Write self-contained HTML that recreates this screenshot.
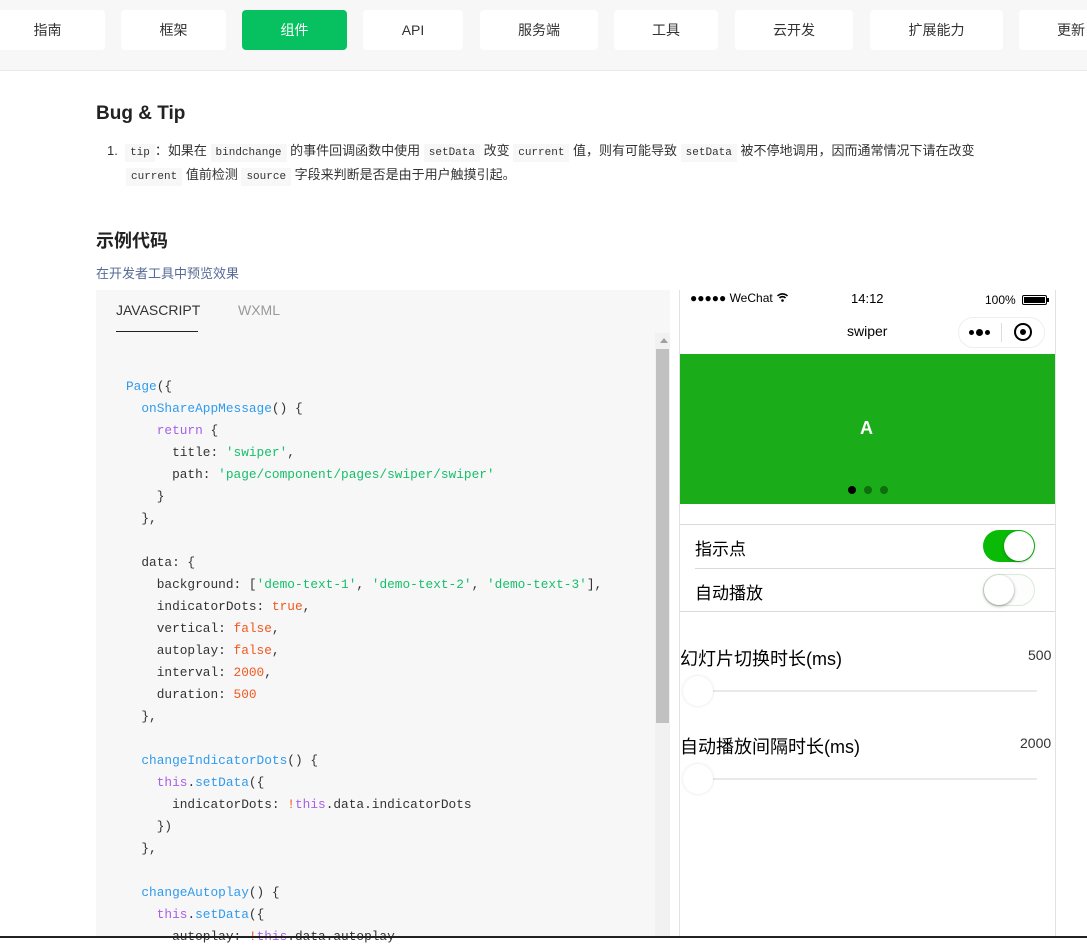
<!DOCTYPE html>
<html><head><meta charset="utf-8"><style>
*{margin:0;padding:0;box-sizing:border-box}
body{width:1087px;height:938px;overflow:hidden;background:#fff;font-family:"Liberation Sans","Noto Sans CJK SC",sans-serif;color:#333;position:relative}
.hdr{position:absolute;left:0;top:0;width:1087px;height:71px;background:#f7f7f7;border-bottom:1px solid #eaeaea}
.nb{position:absolute;top:10px;height:40px;background:#fff;border-radius:4px;font-size:14px;line-height:40px;text-align:center;color:#333}
.nb.on{background:#07c160;color:#fff}
.abs{position:absolute}
code{font-family:"Liberation Mono",monospace;font-size:11px;background:#f7f7f7;padding:3px 5px;color:#333;line-height:14px}
.code{position:absolute;left:96px;top:290px;width:574px;height:648px;background:#f7f7f7}
pre{position:absolute;left:126px;top:376px;font-family:"Liberation Mono",monospace;font-size:12.8px;line-height:22px;color:#333}
.b{color:#2f9bef}.p{color:#a860e8}.g{color:#16c06a}.o{color:#f2581f}
.ph{position:absolute;left:679px;top:290px;width:377px;height:648px;border-left:1px solid #e2e2e2;border-right:1px solid #e2e2e2;background:#fff}
.sw{position:absolute;width:52px;height:32px;border-radius:16px}
</style></head><body>
<div class="hdr"></div>
<div class="nb" style="left:-10px;width:115px">指南</div>
<div class="nb" style="left:121px;width:105px">框架</div>
<div class="nb on" style="left:242px;width:105px">组件</div>
<div class="nb" style="left:363px;width:100px">API</div>
<div class="nb" style="left:480px;width:118px">服务端</div>
<div class="nb" style="left:614px;width:104px">工具</div>
<div class="nb" style="left:735px;width:118px">云开发</div>
<div class="nb" style="left:870px;width:133px">扩展能力</div>
<div class="nb" style="left:1019px;width:90px;text-align:left;padding-left:38px">更新</div>

<div class="abs" style="left:96px;top:103px;font-size:19px;font-weight:bold;color:#222">Bug &amp; Tip</div>
<div class="abs" style="left:107px;top:139px;font-size:13px;line-height:24px;width:930px">1.&nbsp; <code>tip</code>：如果在 <code>bindchange</code> 的事件回调函数中使用 <code>setData</code> 改变 <code>current</code> 值，则有可能导致 <code>setData</code> 被不停地调用，因而通常情况下请在改变<br><span style="padding-left:19px"></span><code>current</code> 值前检测 <code>source</code> 字段来判断是否是由于用户触摸引起。</div>
<div class="abs" style="left:96px;top:227px;font-size:18px;font-weight:bold;color:#222">示例代码</div>
<div class="abs" style="left:96px;top:263px;font-size:13px;color:#576b95">在开发者工具中预览效果</div>

<div class="code"></div>
<div class="abs" style="left:116px;top:302px;font-size:14px;color:#333">JAVASCRIPT</div>
<div class="abs" style="left:116px;top:331px;width:82px;height:1px;background:#222"></div>
<div class="abs" style="left:238px;top:302px;font-size:14px;color:#999">WXML</div>
<div class="abs" style="left:655px;top:333px;width:15px;height:605px;background:#f1f1f1"></div>
<div class="abs" style="left:660px;top:338px;width:0;height:0;border-left:4px solid transparent;border-right:4px solid transparent;border-bottom:5px solid #a0a0a0"></div>
<div class="abs" style="left:656px;top:349px;width:13px;height:374px;background:#c1c1c1"></div>
<pre><span class="b">Page</span>({
  <span class="b">onShareAppMessage</span>() {
    <span class="p">return</span> {
      title: <span class="g">'swiper'</span>,
      path: <span class="g">'page/component/pages/swiper/swiper'</span>
    }
  },

  data: {
    background: [<span class="g">'demo-text-1'</span>, <span class="g">'demo-text-2'</span>, <span class="g">'demo-text-3'</span>],
    indicatorDots: <span class="o">true</span>,
    vertical: <span class="o">false</span>,
    autoplay: <span class="o">false</span>,
    interval: <span class="o">2000</span>,
    duration: <span class="o">500</span>
  },

  <span class="b">changeIndicatorDots</span>() {
    <span class="p">this</span>.<span class="b">setData</span>({
      indicatorDots: <span class="o">!</span><span class="p">this</span>.data.indicatorDots
    })
  },

  <span class="b">changeAutoplay</span>() {
    <span class="p">this</span>.<span class="b">setData</span>({
      autoplay: <span class="o">!</span><span class="p">this</span>.data.autoplay</pre>

<div class="ph"></div>
<div class="abs" style="left:690px;top:291px;font-size:12px;color:#000">●●●●● WeChat <svg width="13" height="10" viewBox="0 0 12 10"><path d="M1 4a7 7 0 0 1 10 0M3 6a4 4 0 0 1 6 0" stroke="#000" stroke-width="1.6" fill="none"/><circle cx="6" cy="8.5" r="1.3"/></svg></div>
<div class="abs" style="left:851px;top:291px;font-size:13px;color:#000">14:12</div>
<div class="abs" style="left:985px;top:293px;font-size:12px;color:#000">100%</div>
<div class="abs" style="left:1022px;top:295px;width:25px;height:10px;border:1px solid #000;border-radius:2px;padding:1px"><div style="width:100%;height:100%;background:#000"></div></div>
<div class="abs" style="left:1047px;top:298px;width:2px;height:4px;background:#000"></div>
<div class="abs" style="left:847px;top:323px;font-size:14px;color:#000">swiper</div>
<div class="abs" style="left:958px;top:317px;width:87px;height:31px;border:1px solid #eee;border-radius:16px;background:#fff"></div>
<div class="abs" style="left:969px;top:330px;width:5px;height:5px;background:#000;border-radius:50%"></div>
<div class="abs" style="left:976px;top:329px;width:7px;height:7px;background:#000;border-radius:50%"></div>
<div class="abs" style="left:985px;top:330px;width:5px;height:5px;background:#000;border-radius:50%"></div>
<div class="abs" style="left:1001px;top:323px;width:1px;height:19px;background:#ddd"></div>
<div class="abs" style="left:1014px;top:323px;width:18px;height:18px;border:2px solid #000;border-radius:50%"></div>
<div class="abs" style="left:1020px;top:329px;width:6px;height:6px;background:#000;border-radius:50%"></div>

<div class="abs" style="left:680px;top:354px;width:375px;height:150px;background:#1aad19"></div>
<div class="abs" style="left:860px;top:418px;font-size:18px;color:#fff;font-weight:bold">A</div>
<div class="abs" style="left:848px;top:486px;width:8px;height:8px;border-radius:50%;background:#000"></div>
<div class="abs" style="left:864px;top:486px;width:8px;height:8px;border-radius:50%;background:#0d6e0d"></div>
<div class="abs" style="left:880px;top:486px;width:8px;height:8px;border-radius:50%;background:#0d6e0d"></div>

<div class="abs" style="left:680px;top:524px;width:375px;height:1px;background:#d9d9d9"></div>
<div class="abs" style="left:695px;top:535px;font-size:17px;color:#000">指示点</div>
<div class="sw" style="left:983px;top:530px;background:#09bb07"></div>
<div class="abs" style="left:1004px;top:531px;width:30px;height:30px;border-radius:50%;background:#fff;box-shadow:0 1px 3px rgba(0,0,0,.3)"></div>
<div class="abs" style="left:695px;top:568px;width:360px;height:1px;background:#d9d9d9"></div>
<div class="abs" style="left:695px;top:579px;font-size:17px;color:#000">自动播放</div>
<div class="sw" style="left:983px;top:574px;border:1px solid #d6ecd6;background:#fdfdfd"></div>
<div class="abs" style="left:984px;top:575px;width:30px;height:30px;border-radius:50%;background:#fff;box-shadow:0 1px 3px rgba(0,0,0,.4)"></div>
<div class="abs" style="left:680px;top:611px;width:375px;height:1px;background:#d9d9d9"></div>

<div class="abs" style="left:680px;top:645px;font-size:18px;color:#000">幻灯片切换时长(ms)</div>
<div class="abs" style="left:1028px;top:647px;font-size:14px;color:#333">500</div>
<div class="abs" style="left:700px;top:690px;width:337px;height:2px;background:#e9e9e9"></div>
<div class="abs" style="left:683px;top:676px;width:30px;height:30px;border-radius:50%;background:#fff;box-shadow:0 0 3px rgba(0,0,0,.12)"></div>
<div class="abs" style="left:680px;top:733px;font-size:18px;color:#000">自动播放间隔时长(ms)</div>
<div class="abs" style="left:1020px;top:735px;font-size:14px;color:#333">2000</div>
<div class="abs" style="left:700px;top:778px;width:337px;height:2px;background:#e9e9e9"></div>
<div class="abs" style="left:683px;top:764px;width:30px;height:30px;border-radius:50%;background:#fff;box-shadow:0 0 3px rgba(0,0,0,.12)"></div>

<div class="abs" style="left:0;top:936px;width:1087px;height:2px;background:#222"></div>
</body></html>
